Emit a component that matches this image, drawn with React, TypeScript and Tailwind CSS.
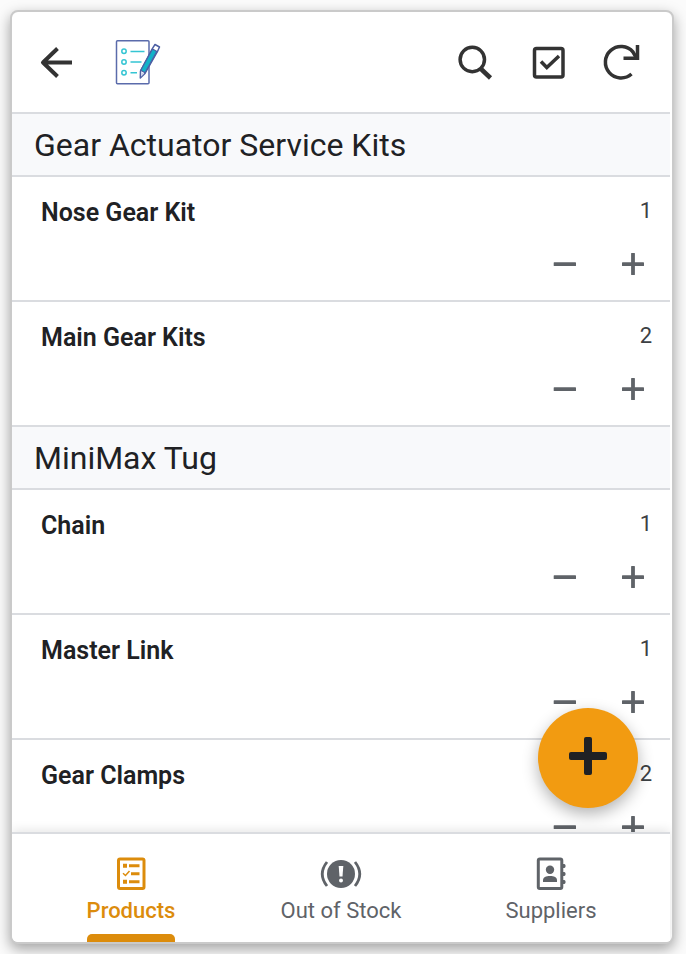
import type { ReactNode } from "react";

type Item = { name: string; count: number };
type Group = { title: string; items: Item[] };

const groups: Group[] = [
  {
    title: "Gear Actuator Service Kits",
    items: [
      { name: "Nose Gear Kit", count: 1 },
      { name: "Main Gear Kits", count: 2 },
    ],
  },
  {
    title: "MiniMax Tug",
    items: [
      { name: "Chain", count: 1 },
      { name: "Master Link", count: 1 },
      { name: "Gear Clamps", count: 2 },
    ],
  },
];

function IconButton({ label, children }: { label: string; children: ReactNode }) {
  return (
    <button type="button" aria-label={label} className="flex size-12 items-center justify-center text-[#333333]">
      {children}
    </button>
  );
}

function BackIcon() {
  return (
    <svg width="40" height="40" viewBox="0 0 40 40" fill="none" stroke="currentColor" strokeWidth="4">
      <path d="M36 20.500H6M21.500 6.500 7 20.500 21.500 34.500" strokeLinejoin="round" />
    </svg>
  );
}

function SearchIcon() {
  return (
    <svg width="40" height="40" viewBox="0 0 40 40" fill="none" stroke="currentColor">
      <circle cx="17.300" cy="17.500" r="12.200" strokeWidth="3.500" />
      <path d="M25.500 26.500 35.500 36" strokeWidth="4.500" />
    </svg>
  );
}

function CheckBoxIcon() {
  return (
    <svg width="40" height="40" viewBox="0 0 40 40" fill="none" stroke="currentColor" strokeWidth="3.500">
      <rect x="6.500" y="6.500" width="28.500" height="28.500" rx="2" />
      <path d="M13 19.500 18.800 25.500 31 14" />
    </svg>
  );
}

function RefreshIcon() {
  return (
    <svg width="40" height="40" viewBox="0 0 40 40" fill="none" stroke="currentColor" strokeWidth="3.500">
      <path d="M30.500 32A15.700 15.700 0 1 1 32 10L35.500 16" />
      <path d="M36.500 3V16.300H22.500" />
    </svg>
  );
}

function Logo() {
  return (
    <svg width="48" height="48" viewBox="0 0 48 48" fill="none" role="img" aria-label="Checklist">
      <rect x="3.500" y="2.800" width="32.500" height="43" rx="1" stroke="#5a6bab" strokeWidth="1.500" />
      <g stroke="#35c5d3" strokeWidth="1.500">
        <circle cx="11" cy="13.300" r="2.200" />
        <circle cx="11" cy="24" r="2.200" />
        <circle cx="11" cy="34.700" r="2.200" />
        <path d="M17.500 13.500H31.500M17.500 24H28.500M17.500 34.700H24" />
      </g>
      <path d="M42 6.500 46.500 9 44.500 13.500 32 35.500 27.300 40 27.500 33 39.500 10.300Z" fill="#fff" stroke="#4d5fa3" strokeWidth="1.500" strokeLinejoin="round" />
      <path d="M39.500 11 43.900 13.400 32 34.700 27.700 32.200Z" fill="#12b2c8" stroke="#4d5fa3" strokeWidth="1.200" />
      <path d="m28.500 34.200 2.500 1.500-3 3Z" fill="#c9d0e8" />
    </svg>
  );
}

function MinusIcon() {
  return (
    <svg width="24" height="24" viewBox="0 0 24 24">
      <rect x="0.700" y="10.200" width="22.300" height="3.800" rx="0.600" fill="currentColor" />
    </svg>
  );
}

function PlusIcon() {
  return (
    <svg width="24" height="24" viewBox="0 0 24 24" fill="currentColor">
      <rect x="1" y="10.200" width="22" height="3.800" rx="0.600" />
      <rect x="10.100" y="1" width="3.800" height="22" rx="0.600" />
    </svg>
  );
}

function ProductsIcon() {
  return (
    <svg width="40" height="36" viewBox="0 0 40 36" fill="none" stroke="currentColor">
      <rect x="7.500" y="3" width="25.500" height="29.500" rx="1.500" strokeWidth="3" />
      <path d="M18 9.700H28.500M20 17.700H28.500M18 25.700H28.500" strokeWidth="3" />
      <path d="M12 17.200 14.500 19.500 18.500 15" strokeWidth="1.500" />
      <path d="M12 9.700H16M12 25.700H16" strokeWidth="4" />
    </svg>
  );
}

function StockIcon() {
  return (
    <svg width="44" height="36" viewBox="0 0 44 36" fill="none" stroke="currentColor">
      <circle cx="22" cy="18" r="14" fill="currentColor" stroke="none" />
      <path d="M8 6Q-1.500 18 8 30M36 6Q45.500 18 36 30" strokeWidth="2.800" />
      <path d="M19.700 10H24.300L23.500 20.500H20.500Z" fill="#fff" stroke="none" />
      <circle cx="22" cy="24.500" r="2" fill="#fff" stroke="none" />
    </svg>
  );
}

function SuppliersIcon() {
  return (
    <svg width="40" height="36" viewBox="0 0 40 36" fill="currentColor">
      <rect x="7.300" y="3" width="23.500" height="29.500" rx="1.500" fill="none" stroke="currentColor" strokeWidth="3" />
      <circle cx="19" cy="13.700" r="4.200" />
      <path d="M12 26V24.500C12 21 15 20 19 20S26 21 26 24.500V26Z" />
      <path d="M32 8H33.500L34.500 9V11L33.500 12H32ZM32 16H33.500L34.500 17V19L33.500 20H32ZM32 24H33.500L34.500 25V27L33.500 28H32Z" />
    </svg>
  );
}

function ProductRow({ name, count }: Item) {
  return (
    <li className="border-b-2 border-[#dadce0] pt-5 pb-3">
      <div className="flex items-start justify-between pr-[18px] pl-[29px]">
        <h3 className="text-[25px] leading-[32px] font-semibold text-[#202124]">{name}</h3>
        <span className="text-[22px] leading-[28px] text-[#3c4043]">{count}</span>
      </div>
      <div className="mt-[11px] flex justify-end gap-5 pr-[13px] text-[#5f6368]">
        <button type="button" aria-label={`Decrease ${name}`} className="flex size-12 items-center justify-center">
          <MinusIcon />
        </button>
        <button type="button" aria-label={`Increase ${name}`} className="flex size-12 items-center justify-center">
          <PlusIcon />
        </button>
      </div>
    </li>
  );
}

function Tab({ label, icon, active = false }: { label: string; icon: ReactNode; active?: boolean }) {
  return (
    <a
      href="#"
      aria-current={active ? "page" : undefined}
      className={active ? "flex justify-center font-medium text-[#dc8c0c]" : "flex justify-center text-[#5f6368]"}
    >
      <span className="flex flex-col items-center pt-[22px]">
        {icon}
        <span className="mt-1 text-[22px] leading-[30px]">{label}</span>
        {active && <span className="mt-2 h-2 w-full rounded-t-[5px] bg-[#dc8c0c]" />}
      </span>
    </a>
  );
}

export default function App() {
  return (
    <div className="h-screen bg-[#fbfbfb] py-[10px] pr-3 pl-[10px] font-['Roboto',sans-serif]">
      <div className="flex h-full flex-col overflow-hidden rounded-lg border-2 border-[#cacaca] bg-white pr-[2px] shadow-[0_5px_14px_rgba(0,0,0,0.36)]">
        <header className="flex h-[102px] shrink-0 items-center border-b-2 border-[#dadce0] pr-[25px] pl-5">
          <IconButton label="Back">
            <BackIcon />
          </IconButton>
          <div className="ml-[33px]">
            <Logo />
          </div>
          <div className="ml-auto flex gap-[25px]">
            <IconButton label="Search">
              <SearchIcon />
            </IconButton>
            <IconButton label="Select items">
              <CheckBoxIcon />
            </IconButton>
            <IconButton label="Refresh">
              <RefreshIcon />
            </IconButton>
          </div>
        </header>

        <main className="relative min-h-0 flex-1">
          <div className="h-full overflow-hidden">
            {groups.map((group) => (
              <section key={group.title}>
                <h2 className="border-b-2 border-[#dadce0] bg-[#f8f9fb] px-[22px] pt-[11px] pb-[10px] text-[32px] leading-[40px] text-[#202124]">
                  {group.title}
                </h2>
                <ul>
                  {group.items.map((item) => (
                    <ProductRow key={item.name} {...item} />
                  ))}
                </ul>
              </section>
            ))}
          </div>
          <button
            type="button"
            aria-label="Add product"
            className="absolute right-8 bottom-6 flex size-[100px] items-center justify-center rounded-full bg-[#f29b11] pb-1 text-[#202124] shadow-[0_6px_16px_rgba(0,0,0,0.3)]"
          >
            <svg width="40" height="40" viewBox="0 0 40 40" fill="currentColor">
              <rect x="1" y="16" width="38" height="8" rx="2" />
              <rect x="16" y="1" width="8" height="38" rx="2" />
            </svg>
          </button>
        </main>

        <nav className="relative grid h-[110px] shrink-0 grid-cols-3 border-t-2 border-[#dadce0] bg-white px-[14px] shadow-[0_-2px_10px_rgba(0,0,0,0.1)]">
          <Tab label="Products" icon={<ProductsIcon />} active />
          <Tab label="Out of Stock" icon={<StockIcon />} />
          <Tab label="Suppliers" icon={<SuppliersIcon />} />
        </nav>
      </div>
    </div>
  );
}
